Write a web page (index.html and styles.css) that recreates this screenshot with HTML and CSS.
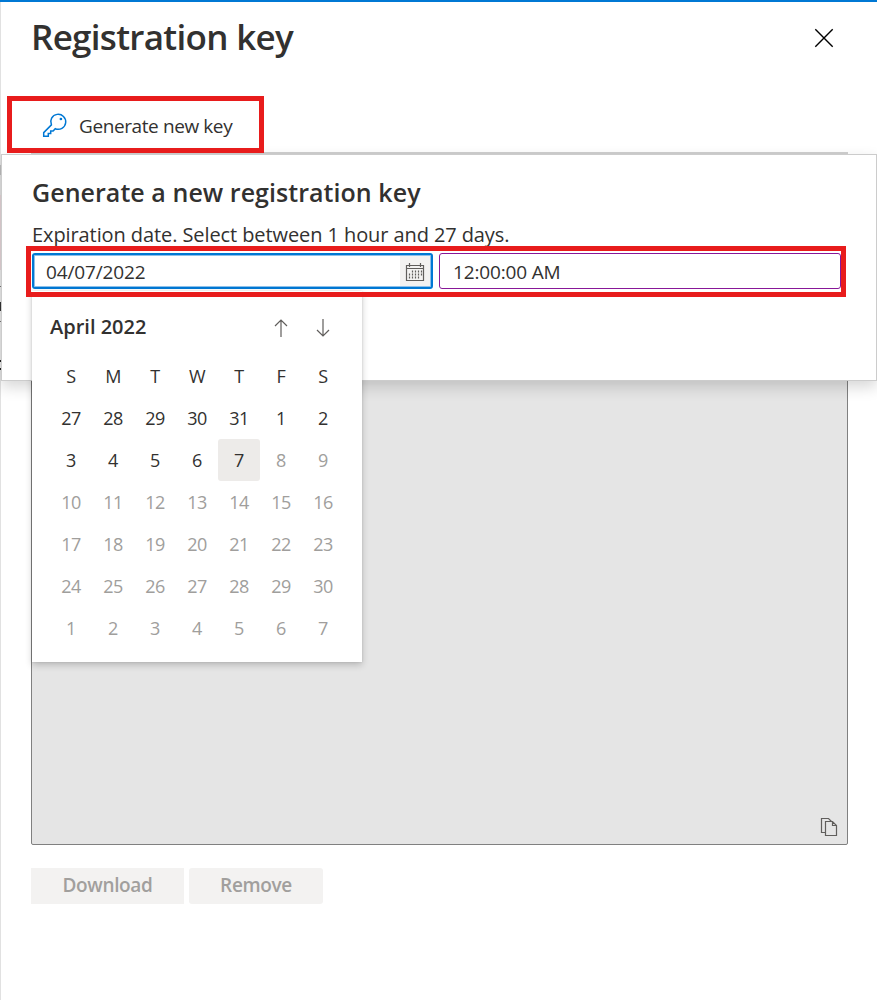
FILE: index.html
```html
<!DOCTYPE html>
<html lang="en">
<head>
<meta charset="utf-8">
<title>Registration key</title>
<link rel="stylesheet" href="styles.css">
</head>
<body>
<main class="blade">
  <div class="edge"></div>
  <header class="header">
    <h1 class="title">Registration key</h1>
    <svg class="close" width="20" height="20" viewBox="0 0 20 20"><path d="M1.3 1.3 18.7 18.7M18.7 1.3 1.3 18.7"/></svg>
  </header>
  <div class="toolbar">
    <svg class="key" width="26" height="26" viewBox="0 0 26 26"><path d="M9.4 12.9 1.7 20.6V24.2H6.3V21.6H8.7V19.1H11.1L13.3 16.7A7.5 7.5 0 1 0 9.4 12.9Z"/><circle cx="18.9" cy="7" r="1.35"/></svg>
    <span class="command">Generate new key</span>
  </div>
  <section class="token">
    <svg class="copy" width="18" height="20" viewBox="0 0 18 20"><path d="M5.5 15.5H1.5V1.5H8.5L11.5 4.5M5.5 4.5H12.5L16.5 8.5V18.5H5.5ZM12.5 4.5V8.5H16.5"/></svg>
  </section>
  <footer class="actions">
    <button class="button download" disabled>Download</button>
    <button class="button remove" disabled>Remove</button>
  </footer>

  <section class="dialog">
    <h2 class="dialog-title">Generate a new registration key</h2>
    <p class="hint">Expiration date. Select between 1 hour and 27 days.</p>
    <div class="fields">
      <div class="field date"><span class="value">04/07/2022</span>
        <span class="picker"><svg width="20" height="20" viewBox="0 0 20 20"><path d="M1.5 3.5H18.5V18.5H1.5ZM1.5 6.5H18.5M4.5 1V5M15.5 1V5"/><path class="dots" d="M7.5 8.5V16.5M10.5 8.5V16.5M13.5 8.5V16.5M16.5 8.5V14.5M4.5 11.5V16.5"/></svg></span>
      </div>
      <div class="field time"><span class="value">12:00:00 AM</span></div>
    </div>
  </section>

  <section class="calendar">
    <div class="month"><span class="month-name">April 2022</span>
      <svg class="arrow" width="42" height="22" viewBox="0 0 42 22"><path d="M21 20V3M15 9 21 3 27 9"/></svg>
      <svg class="arrow" width="42" height="22" viewBox="0 0 42 22"><path d="M21 2V19M15 13 21 19 27 13"/></svg>
    </div>
    <div class="days">
      <span>S</span><span>M</span><span>T</span><span>W</span><span>T</span><span>F</span><span>S</span>
      <span>27</span><span>28</span><span>29</span><span>30</span><span>31</span><span>1</span><span>2</span>
      <span>3</span><span>4</span><span>5</span><span>6</span><span class="selected">7</span><span class="off">8</span><span class="off">9</span>
      <span class="off">10</span><span class="off">11</span><span class="off">12</span><span class="off">13</span><span class="off">14</span><span class="off">15</span><span class="off">16</span>
      <span class="off">17</span><span class="off">18</span><span class="off">19</span><span class="off">20</span><span class="off">21</span><span class="off">22</span><span class="off">23</span>
      <span class="off">24</span><span class="off">25</span><span class="off">26</span><span class="off">27</span><span class="off">28</span><span class="off">29</span><span class="off">30</span>
      <span class="off">1</span><span class="off">2</span><span class="off">3</span><span class="off">4</span><span class="off">5</span><span class="off">6</span><span class="off">7</span>
    </div>
  </section>
  <div class="mark mark-command"></div>
  <div class="mark mark-fields"></div>
</main>
</body>
</html>
```
FILE: styles.css
```css
* { box-sizing: border-box; }
body { margin: 0; font-family: "Open Sans", "Noto Sans", sans-serif; color: #323130; background: #fff; }
h1, h2, p { margin: 0; font-weight: 600; white-space: nowrap; }
svg { fill: none; stroke: #605e5c; stroke-width: 1.2; flex: none; }
.blade { position: relative; height: 1000px; overflow: hidden; border-top: 2px solid #0078d4; padding: 0 29px 0 31px; display: flex; flex-direction: column; }
.edge { position: absolute; left: 0; top: 0; width: 1px; height: 998px;
  background: linear-gradient(#e1e1e1 163px, #bdbdbd 163px 173px, #e1e1e1 173px 193px, #e3d3d6 193px 268px, #e9e9e9 268px 284px, #777 284px 285px, #e9e9e9 285px 300px, #333 300px 309px, #e9e9e9 309px 319px, #777 319px 320px, #e9e9e9 320px 358px, #222 358px 360px, #e9e9e9 360px 366px, #222 366px 368px, #e1e1e1 368px); }
.header { height: 92px; display: flex; justify-content: space-between; padding: 10px 14px 0 0; }
.title { font-size: 35px; line-height: 50px; letter-spacing: -.7px; }
.close { margin-top: 16px; stroke: #000; stroke-width: 1.4; }
.toolbar { height: 60px; display: flex; align-items: center; gap: 11px; padding: 4px 0 0 11px; border-bottom: 2px solid #cfcfcf; }
.key { stroke: #0078d4; stroke-width: 1.5; }
.key circle { fill: #0078d4; stroke: none; }
.command { font-size: 19px; letter-spacing: -.4px; padding-top: 1px; white-space: nowrap; }
.token { margin-top: 146px; height: 545px; border: 1px solid #808080; border-radius: 2px; background: #e5e5e5; display: flex; align-items: flex-end; justify-content: flex-end; padding: 0 9px 7px; }
.actions { display: flex; gap: 5px; margin-top: 23px; }
.button { height: 36px; border: 0; padding: 0 0 2px; background: #f3f2f1; color: #a19f9d; font: 600 19px "Open Sans", "Noto Sans", sans-serif; letter-spacing: -.35px; }
.download { width: 153px; }
.remove { width: 134px; border-radius: 3px; }
.dialog { position: absolute; left: 1px; top: 152px; width: 876px; height: 227px; border: 1px solid #ccc; background: #fff; box-shadow: 0 6px 14px rgba(0,0,0,.16); padding: 19px 34px 0 30px; }
.dialog-title { font-size: 25px; line-height: 36px; letter-spacing: .05px; }
.hint { font-size: 20px; font-weight: 400; line-height: 30px; letter-spacing: -.09px; margin-top: 10px; }
.fields { display: flex; gap: 6px; margin-top: 3px; }
.field { height: 36px; border-radius: 3px; display: flex; align-items: center; justify-content: space-between; font-size: 19px; letter-spacing: -.15px; }
.date { width: 401px; border: 2px solid #0078d4; box-shadow: inset 0 0 0 1px #8cc0ea; padding-left: 12px; }
.time { width: 402px; border: 1px solid #881798; padding-left: 13px; }
.value { padding-top: 1px; }
.picker { width: 30px; height: 30px; margin-right: 1px; padding-top: 2px; display: flex; align-items: center; justify-content: center; background: #f3f2f1; }
.picker .dots { stroke-dasharray: 2 1; }
.calendar { position: absolute; left: 32px; top: 289px; width: 330px; height: 371px; background: #fff; box-shadow: 0 3px 7px rgba(0,0,0,.2), 0 0 2px rgba(0,0,0,.12); padding: 15px 18px 0; }
.month { height: 42px; display: flex; align-items: center; font-size: 20px; font-weight: 600; }
.month-name { flex: 1; padding-bottom: 2px; }
.arrow { margin-top: 2px; }
.days { display: grid; grid-template-columns: repeat(7, 42px); grid-auto-rows: 42px; margin-top: 7px; font-size: 18px; letter-spacing: -.5px; }
.days span { display: flex; align-items: center; justify-content: center; }
.days .selected { background: #edebe9; border-radius: 3px; }
.days .off { color: #a09e9c; }
.mark { position: absolute; border: 5px solid #e81c1c; }
.mark-command { left: 7px; top: 94px; width: 257px; height: 57px; }
.mark-fields { left: 26px; top: 244px; width: 820px; height: 51px; }
```
